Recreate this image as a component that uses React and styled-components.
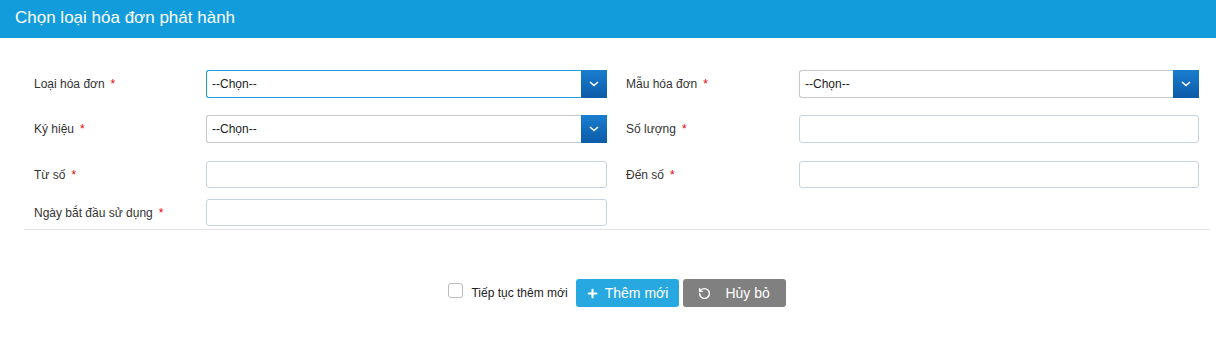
import React, { useState } from 'react';
import styled, { createGlobalStyle } from 'styled-components';
import { Plus, RotateCcw } from 'lucide-react';

const GlobalStyle = createGlobalStyle`
    body {
        margin: 0;
        background: #fff;
        font-family: "Liberation Sans", Arial, sans-serif;
        color: #333;
    }
`;

const Page = styled.div`
    width: 1216px;
    height: 348px;
    background: #fff;
`;

const Header = styled.div`
    height: 38px;
    background: #129cdc;
    color: #fff;
    font-size: 17px;
    line-height: 36px;
    padding-left: 15px;
`;

const Form = styled.div`
    margin: 0 6px 0 24px;
    padding-top: 32px;
    border-bottom: 1px solid #e3e3e3;
    padding-bottom: 3px;
`;

const Row = styled.div`
    display: flex;
    align-items: center;
    height: ${p => p.h || 28}px;
    margin-bottom: ${p => p.gap || 0}px;
`;

const Field = styled.div`
    display: flex;
    align-items: center;
    margin-right: 19px;
`;

const Label = styled.label`
    width: ${p => p.w}px;
    box-sizing: border-box;
    padding-left: ${p => p.pl || 0}px;
    font-size: 12px;
    color: #333;
`;

const Star = styled.span`
    color: #e00;
    margin-left: 6px;
`;

const SelectBox = styled.div`
    display: flex;
    width: ${p => p.w}px;
    height: 28px;
    box-sizing: border-box;
    border: 1px solid ${p => (p.focus ? '#1ea0dc' : '#c8c8c8')};
    border-right: none;
    border-radius: 3px 0 0 3px;
    background: #fff;
`;

const SelectText = styled.div`
    flex: 1;
    font-size: 12px;
    line-height: 26px;
    padding-left: 5px;
    color: #222;
`;

const DropButton = styled.div`
    width: 26px;
    height: 28px;
    margin-top: -1px;
    background: linear-gradient(#1a7dce, #0b5ba8);
    display: flex;
    align-items: center;
    justify-content: center;
`;

const TextInput = styled.input`
    width: ${p => p.w}px;
    height: ${p => p.h || 27}px;
    box-sizing: border-box;
    border: 1px solid #c6d4de;
    border-radius: 3px;
    outline: none;
    font-size: 12px;
    padding: 0 5px;
`;

const Footer = styled.div`
    display: flex;
    align-items: center;
    justify-content: center;
    padding-left: 18px;
    margin-top: 49px;
`;

const CheckBox = styled.span`
    width: 15px;
    height: 15px;
    box-sizing: border-box;
    border: 1px solid #bbb;
    border-radius: 3px;
    background: #fff;
    margin-top: -6px;
    margin-right: 8px;
`;

const CheckLabel = styled.span`
    font-size: 12px;
    color: #222;
    margin-right: 4px;
`;

const Button = styled.button`
    display: flex;
    align-items: center;
    justify-content: center;
    gap: ${p => p.iconGap}px;
    width: 103px;
    height: 28px;
    border: none;
    border-radius: 3px;
    background: ${p => p.bg};
    color: #fff;
    font-family: "Liberation Sans", Arial, sans-serif;
    font-size: 14px;
    margin-left: 4px;
    padding: 0;
`;

function Chevron() {
    return (
        <svg width="10" height="6" viewBox="0 0 10 6">
            <path d="M1 1l4 3.5L9 1" stroke="#fff" strokeWidth="1.6" fill="none" />
        </svg>
    );
}

function Req({ children, w, pl }) {
    return (
        <Label w={w} pl={pl}>
            {children}
            <Star>*</Star>
        </Label>
    );
}

function Select({ w, focus }) {
    return (
        <>
            <SelectBox w={w - 26} focus={focus}>
                <SelectText>--Chọn--</SelectText>
            </SelectBox>
            <DropButton>
                <Chevron />
            </DropButton>
        </>
    );
}

export default function App() {
    const [more, setMore] = useState(false);
    return (
        <Page>
            <GlobalStyle />
            <Header>Chọn loại hóa đơn phát hành</Header>
            <Form>
                <Row gap={17}>
                    <Field>
                        <Req w={182} pl={10}>Loại hóa đơn</Req>
                        <Select w={401} focus />
                    </Field>
                    <Field>
                        <Req w={173}>Mẫu hóa đơn</Req>
                        <Select w={400} />
                    </Field>
                </Row>
                <Row gap={18}>
                    <Field>
                        <Req w={182} pl={10}>Ký hiệu</Req>
                        <Select w={401} />
                    </Field>
                    <Field>
                        <Req w={173}>Số lượng</Req>
                        <TextInput w={400} h={28} />
                    </Field>
                </Row>
                <Row h={27} gap={11}>
                    <Field>
                        <Req w={182} pl={10}>Từ số</Req>
                        <TextInput w={401} />
                    </Field>
                    <Field>
                        <Req w={173}>Đến số</Req>
                        <TextInput w={400} />
                    </Field>
                </Row>
                <Row h={27}>
                    <Field>
                        <Req w={182} pl={10}>Ngày bắt đầu sử dụng</Req>
                        <TextInput w={401} />
                    </Field>
                </Row>
            </Form>
            <Footer>
                <CheckBox onClick={() => setMore(!more)} />
                <CheckLabel>Tiếp tục thêm mới</CheckLabel>
                <Button bg="#27a8e0" iconGap={6}>
                    <Plus size={13} strokeWidth={4} />
                    Thêm mới
                </Button>
                <Button bg="#808080" iconGap={14}>
                    <RotateCcw size={13} strokeWidth={2.6} />
                    Hủy bỏ
                </Button>
            </Footer>
        </Page>
    );
}
